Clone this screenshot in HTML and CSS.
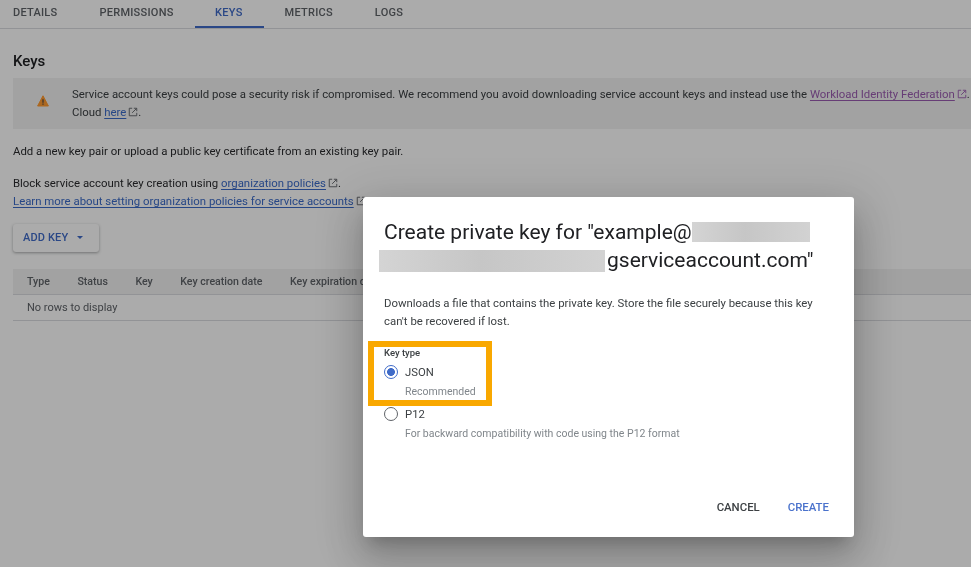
FILE: index.html
```html
<!DOCTYPE html>
<html lang="en">
<head>
<meta charset="utf-8">
<title>Keys</title>
<link rel="stylesheet" href="styles.css">
</head>
<body>
<svg class="defs" width="0" height="0" aria-hidden="true">
  <symbol id="ext" viewBox="0 0 12 12">
    <path d="M5 1.5H1.5v9h9V7M7 1.5h3.5V5M10.2 1.8 5 7" fill="none" stroke="currentColor" stroke-width="1.1"/>
  </symbol>
</svg>
<main class="page">
  <nav class="tabs">
    <span class="tab tab-first">DETAILS</span>
    <span class="tab">PERMISSIONS</span>
    <span class="tab tab-active">KEYS</span>
    <span class="tab">METRICS</span>
    <span class="tab">LOGS</span>
  </nav>
  <h1 class="heading">Keys</h1>
  <section class="banner">
    <svg class="warn" width="12" height="12" viewBox="0 0 12 12" aria-hidden="true"><path d="M6 .8 11.4 11H.6Z" fill="#ff9a30" stroke="#ff9a30" stroke-width="1" stroke-linejoin="round"/><path d="M5.4 4.2h1.2v3.6H5.4zM5.4 8.5h1.2v1.2H5.4z" fill="#4a4a4a"/></svg>
    <p class="banner-text">Service account keys could pose a security risk if compromised. We recommend you avoid downloading service account keys and instead use the <a class="link link-visited">Workload Identity Federation</a><svg class="ext ext-visited"><use href="#ext"/></svg>.<br>Cloud <a class="link">here</a><svg class="ext"><use href="#ext"/></svg>.</p>
  </section>
  <p class="para">Add a new key pair or upload a public key certificate from an existing key pair.</p>
  <p class="para para-policy">Block service account key creation using <a class="link">organization policies</a><svg class="ext"><use href="#ext"/></svg>.<br><a class="link">Learn more about setting organization policies for service accounts</a><svg class="ext"><use href="#ext"/></svg></p>
  <button class="add-key">ADD KEY<span class="caret"></span></button>
  <div class="table">
    <div class="thead">
      <span>Type</span><span>Status</span><span>Key</span><span>Key creation date</span><span>Key expiration date</span>
    </div>
    <div class="tbody">No rows to display</div>
  </div>
</main>
<div class="scrim"></div>
<section class="dialog">
  <h2 class="dialog-title">Create private key for "example@<span class="redact redact-a"></span><br><span class="redact redact-b"></span>gserviceaccount.com"</h2>
  <p class="dialog-desc">Downloads a file that contains the private key. Store the file securely because this key can't be recovered if lost.</p>
  <div class="key-type">Key type</div>
  <div class="option">
    <span class="radio radio-on"></span><span class="option-label">JSON</span>
  </div>
  <div class="option-hint">Recommended</div>
  <div class="option option-p12">
    <span class="radio"></span><span class="option-label">P12</span>
  </div>
  <div class="option-hint">For backward compatibility with code using the P12 format</div>
  <div class="actions">
    <span class="btn btn-cancel">CANCEL</span>
    <span class="btn btn-create">CREATE</span>
  </div>
  <div class="highlight"></div>
</section>
</body>
</html>
```
FILE: styles.css
```css
* { box-sizing: border-box; }
html, body { margin: 0; height: 567px; overflow: hidden; background: #fff; }
body { font-family: Roboto, "Liberation Sans", sans-serif; color: #202124; position: relative; }
.defs { position: absolute; }
.page { width: 971px; height: 567px; filter: blur(.4px); }

.tabs { display: flex; height: 29px; padding-left: 13px; border-bottom: 1px solid #dadce0; }
.tab { padding: 6px 21px 0; height: 28px; font-size: 11px; font-weight: 500; letter-spacing: .25px; color: #5f6368; line-height: 13px; }
.tab-first { padding-left: 0; }
.tab-active { color: #3f6bc8; border-bottom: 2px solid #3f6bc8; padding: 6px 21px 0 20.5px; }

.heading { margin: 22px 0 0 13px; font-size: 15px; line-height: 20px; font-weight: 500; }

.banner { display: flex; height: 51px; margin: 7px 0 0 13px; background: #f2f2f2; }
.warn { margin: 17px 0 0 24px; flex: none; }
.banner-text { margin: 7px 0 0 23px; font-size: 11.4px; line-height: 18px; color: #3c4043; white-space: nowrap; }

.para { margin: 13px 0 0 13px; font-size: 11.4px; line-height: 18px; color: #2a2b2e; white-space: nowrap; }
.para-policy { margin-top: 14px; }
.link { color: #3b6bc8; text-decoration: underline; text-underline-offset: 2px; }
.link-visited { color: #9a5cb0; }
.ext { width: 10px; height: 10px; margin-left: 2px; vertical-align: -1px; color: #5f6368; }
.ext-visited { color: #9a5cb0; }

.add-key { display: flex; align-items: center; width: 86px; height: 28px; margin: 14px 0 0 13px; padding: 0 0 2px 10px; border: 0; border-radius: 3px; background: #fff; font: 500 11px Roboto, sans-serif; letter-spacing: .15px; color: #3f6bc8; box-shadow: 0 1px 3px rgba(60,64,67,.45); }
.caret { margin-left: 9px; border: 3.5px solid transparent; border-top: 3.5px solid #3f6bc8; border-bottom: 0; }

.table { margin: 17px 0 0 13px; }
.thead { display: flex; gap: 27.5px; height: 26px; padding-left: 14px; align-items: center; background: #f2f2f2; border-bottom: 1px solid #dadce0; font-size: 10.6px; font-weight: 500; color: #5f6368; white-space: nowrap; }
.tbody { height: 26px; padding-left: 14px; line-height: 25px; font-size: 11px; color: #5f6368; border-bottom: 1px solid #dadce0; }

.scrim { position: absolute; inset: 0; background: rgba(0,0,0,.33); }

.dialog { position: absolute; left: 363px; top: 197px; width: 491px; height: 340px; padding: 21px 25px 0 21px; background: #fff; border-radius: 3px; box-shadow: 0 11px 15px -7px rgba(0,0,0,.2), 0 24px 38px 3px rgba(0,0,0,.14), 0 9px 46px 8px rgba(0,0,0,.12); }
.dialog > * { filter: blur(.35px); }
.dialog-title { margin: 0; font-size: 21px; line-height: 28px; font-weight: 400; color: #202124; white-space: nowrap; }
.redact { display: inline-block; background: linear-gradient(90deg, #d4d4d4, #c6c6c6 45%, #d2d2d2); }
.redact-a { width: 118px; height: 20px; vertical-align: -3px; }
.redact-b { width: 226px; height: 22px; margin: 0 2px 0 -5px; vertical-align: -5px; }
.dialog-desc { margin: 20px 0 0; font-size: 11.38px; line-height: 18px; color: #3c4043; }
.key-type { margin-top: 17px; font-size: 9.5px; line-height: 12px; font-weight: 500; color: #3c4043; }
.option { display: flex; align-items: center; height: 18px; margin-top: 4px; font-size: 11.3px; color: #3c4043; }
.radio { width: 14px; height: 14px; margin-right: 7px; border: 1.5px solid #5f6368; border-radius: 50%; flex: none; }
.radio-on { border-color: #3f6bc8; background: radial-gradient(circle, #3f6bc8 0 3.6px, #fff 4.2px); }
.option-hint { margin: 3px 0 0 21px; font-size: 10.5px; line-height: 16px; color: #80868b; }
.option-p12 { margin-top: 5px; }

.actions { display: flex; justify-content: flex-end; gap: 28px; margin-top: 58px; font-size: 11.4px; font-weight: 500; line-height: 14px; }
.btn-cancel { color: #3c4043; }
.btn-create { color: #4a72cc; }

.highlight { position: absolute; left: 5px; top: 144px; width: 124px; height: 65px; border: 6px solid #f9a800; }
```
